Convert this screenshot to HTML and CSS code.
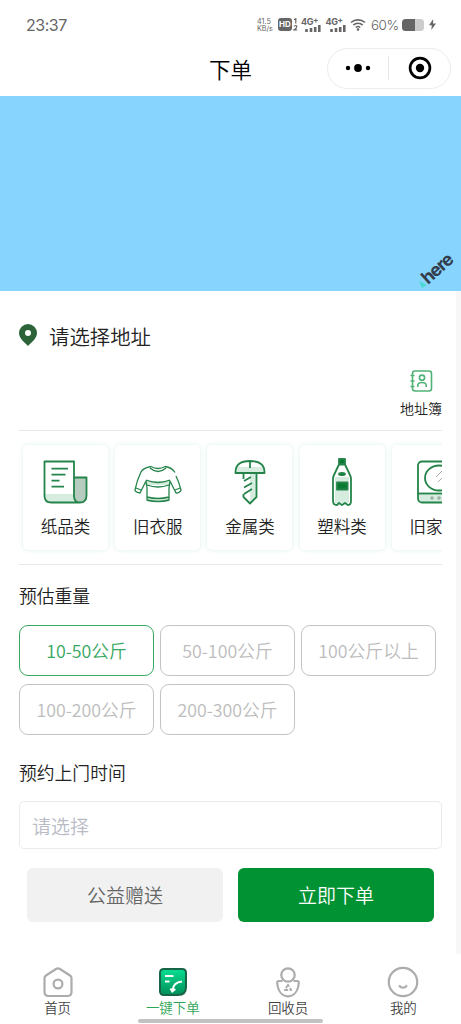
FILE: index.html
```html
<!DOCTYPE html>
<html lang="zh-CN">
<head>
<meta charset="utf-8">
<title>下单</title>
<link rel="stylesheet" href="styles.css">
</head>
<body>
<header class="status">
  <span class="time">23:37</span>
  <div class="indicators">
    <span class="speed">41.5<br>KB/s</span>
    <span class="hd"><b>HD</b><svg viewBox="0 0 5 13" width="5" height="13"><path d="M1 1.500 2.800.8V5.500M.8 8.200q3-1.500 3 .3T.8 12h3.500"/></svg></span>
    <span class="cell">4G<sup>+</sup>
      <svg viewBox="0 0 16 7" width="16" height="7"><path d="M1.500 4v3M6 3V7M10.200 2v5M14.300 0v7"/></svg></span>
    <span class="cell">4G<sup>+</sup>
      <svg viewBox="0 0 16 7" width="16" height="7"><path d="M1.500 4v3M6 3V7M10.200 2v5M14.300 0v7"/></svg></span>
    <svg class="wifi" viewBox="0 0 16 13" width="16" height="13"><path d="M1 4.500a10.500 10.500 0 0 1 14 0M3.300 7.100a7 7 0 0 1 9.400 0M5.700 9.500a3.600 3.600 0 0 1 4.600 0"/><circle cx="8" cy="11.500" r="1.300"/></svg>
    <span class="percent">60%</span>
    <span class="battery"></span>
    <svg class="bolt" viewBox="0 0 7 11" width="7" height="11"><path d="M4.200 0 0 6.200h2.800L2.300 11 7 4.600H4z"/></svg>
  </div>
</header>
<nav class="titlebar">
  <h1>下单</h1>
  <div class="capsule">
    <svg viewBox="0 0 26 10" width="26" height="10"><circle cx="3" cy="5" r="2.200"/><circle cx="13" cy="5" r="3.900"/><circle cx="23" cy="5" r="2.200"/></svg>
    <span class="split"></span>
    <svg viewBox="0 0 24 24" width="24" height="24"><circle cx="12" cy="12" r="9.900" fill="none" stroke="#000" stroke-width="2.700"/><circle cx="12" cy="12" r="4.200"/></svg>
  </div>
</nav>
<section class="map">
  <svg class="here" viewBox="0 0 44 44" width="44" height="44"><path d="m2 32 8 4-5 3z" fill="#48dad0"/><text x="11" y="36" transform="rotate(-42 11 36)">here</text></svg>
</section>
<main class="sheet">
  <div class="address">
    <svg viewBox="0 0 18 22" width="18" height="22"><path fill-rule="evenodd" d="M9 0a9 9 0 0 1 9 9c0 5-4.500 8.500-9 13C4.500 17.500 0 14 0 9a9 9 0 0 1 9-9zm0 6a3 3 0 1 0 0 6 3 3 0 0 0 0-6z"/></svg>
    <span>请选择地址</span>
  </div>
  <div class="book-row">
    <div class="book">
      <svg viewBox="0 0 24 24" width="24" height="24"><rect x="3.500" y="2" width="19" height="20" rx="2.500"/><path d="M1.500 6.500h4M1.500 12h4M1.500 17.500h4M8.800 18v-1.500c0-4 8.400-4 8.400 0V18"/><circle cx="13" cy="8.700" r="2.600"/></svg>
      <span>地址簿</span>
    </div>
  </div>
  <div class="categories">
    <div class="card">
      <svg viewBox="0 0 48 48" width="48" height="48"><path class="tint" d="M3 36h30v9H9q-6-2-6-9z"/><path class="shade" d="M32 19h12v20q0 6-6 6-6-1-6-6z"/><path d="M32 39V3.500H2.500V38q0 6.500 7 6.500H38q6.500 0 6.500-7V19.500H32V38q0 6.500 6 6.500M9.500 10.700H26M9.500 16.700h14M9.500 22.700h8M9.500 28.700H22"/></svg>
      <span>纸品类</span>
    </div>
    <div class="card">
      <svg class="fine" viewBox="0 0 48 48" width="48" height="48"><path class="tint" d="M13 40h22v4H13zM13 23h22v4H13z"/><path d="M17 8.500Q9 10 7 14C4 20 2 27 1 32q0 2 5 3l6-12 1 7v12q11 3 22 0V30l1-7 6 12q4 0 5-3-2-8-5-14M31 8.500q7 1 10 6M17 8.500q7 4 14 0M16 10q8 7 16 0M12 22q12 5 24 0M13 27q11 4 22 0M13 39q11 3 22 0M2 30l5 2M46 30l-5 2"/></svg>
      <span>旧衣服</span>
    </div>
    <div class="card">
      <svg viewBox="0 0 48 48" width="48" height="48"><path class="tint" d="M10 9h28v6H10zM24 15h6v24l-6 6z"/><path d="M9.500 15Q9 3 24 3t14.500 12zM24 4v6M17.500 15v6M30.500 15v24L24 45.500 17.500 39v-3M18 23l7-4M18 29.500l8-4.500M18 36l8-5"/></svg>
      <span>金属类</span>
    </div>
    <div class="card">
      <svg viewBox="0 0 48 48" width="48" height="48"><path class="tint" d="M17 19h14v26H17z"/><path d="M21 6.500 16 17q-1 2-1 4v22q0 4 4 4l2-2 3 2 3-2 3 2q3 0 3-4V21q0-2-1-4L27 6.500z"/><path class="solid" d="M21 1h6v5h-6zM19 24.500h10.500v7H19z"/><ellipse class="solid" cx="24" cy="16" rx="3" ry="1.200"/></svg>
      <span>塑料类</span>
    </div>
    <div class="card">
      <svg class="appliance" viewBox="0 0 48 48" width="48" height="48"><path class="tint" d="M8 36h32v8H8z"/><rect x="8" y="3.500" width="32" height="41" rx="4"/><path d="M8 35.500h32"/><ellipse cx="29" cy="20" rx="14" ry="12.500"/><path class="shine" d="m26 19 6-6M28 24l8-8"/><circle class="knob" cx="22" cy="40" r="1.800"/><circle class="knob" cx="29" cy="40" r="1.800"/></svg>
      <span>旧家电</span>
    </div>
  </div>
  <h2>预估重量</h2>
  <div class="weights">
    <div class="option active">10-50公斤</div>
    <div class="option">50-100公斤</div>
    <div class="option">100公斤以上</div>
    <div class="option">100-200公斤</div>
    <div class="option">200-300公斤</div>
  </div>
  <h2 class="visit">预约上门时间</h2>
  <div class="field">请选择</div>
  <div class="actions">
    <div class="button">公益赠送</div>
    <div class="button primary">立即下单</div>
  </div>
</main>
<footer class="tabs">
  <div class="tab">
    <svg viewBox="0 0 32 32" width="32" height="32"><path d="M14 3 4 9.500Q2.500 10.500 2.500 12v14q0 4 4 4h19q4 0 4-4V12q0-1.500-1.500-2.500L18 3q-2-1.200-4 0z"/><circle cx="16" cy="18" r="4.400"/></svg>
    <span>首页</span>
  </div>
  <div class="tab current">
    <svg viewBox="0 0 32 32" width="32" height="32"><defs><linearGradient id="leaf" x1="0" y1="0" x2="0" y2="1"><stop offset="0" stop-color="#08df92"/><stop offset="1" stop-color="#018f57"/></linearGradient></defs><path d="M7 3h18q4 0 4 4v14q0 8-8 8H7q-4 0-4-4V7q0-4 4-4z" fill="url(#leaf)" stroke="#176548" stroke-width="2"/><path d="M8 10h8.500M8 15.500h4.500M25 15.500q-9 1-9.500 9M13.500 22.500l1.800 3 3-2.500" stroke="#fff" stroke-width="2"/></svg>
    <span>一键下单</span>
  </div>
  <div class="tab">
    <svg viewBox="0 0 32 32" width="32" height="32"><circle cx="16" cy="9" r="6.700"/><path d="M10.500 15H7q-2 0-1.800 2C6 25 10 30.300 16 30.300S26 25 26.800 17q.2-2-1.800-2h-3.500"/><path d="M16 18.800 12.800 24h6.400z" stroke-width="1.800" stroke-linejoin="round" stroke-dasharray="4 1.500"/></svg>
    <span>回收员</span>
  </div>
  <div class="tab">
    <svg viewBox="0 0 32 32" width="32" height="32"><circle cx="16" cy="16" r="14.200"/><path d="M12 19.500q4 4.500 8 0"/></svg>
    <span>我的</span>
  </div>
  <div class="home-bar"></div>
</footer>
</body>
</html>
```

FILE: styles.css
```css
* { box-sizing: border-box; }
body {
  margin: 0;
  width: 461px;
  height: 1024px;
  display: flex;
  flex-direction: column;
  overflow: hidden;
  background: #fff;
  color: #222;
  font-family: "Noto Sans CJK SC", "Noto Sans", sans-serif;
  font-weight: 350;
}
svg { display: block; flex: none; }
h1, h2 { margin: 0; font-weight: 350; }

.status {
  height: 48px;
  padding: 1px 25px 0 26px;
  display: flex;
  align-items: center;
  justify-content: space-between;
  color: #666;
  font-family: Inter, Roboto, sans-serif;
  font-weight: 400;
}
.time { font-size: 16px; letter-spacing: -0.5px; }
.indicators { display: flex; align-items: center; height: 16px; }
.speed { width: 21px; font-size: 7.2px; line-height: 7px; }
.hd { display: flex; width: 23px; align-items: center; gap: 1px; }
.hd b {
  width: 14px;
  height: 13px;
  border-radius: 3px;
  background: #666;
  color: #fff;
  font-size: 8px;
  line-height: 13px;
  text-align: center;
}
.hd svg { fill: none; stroke: #666; stroke-width: 1.2; }
.cell { width: 24.5px; height: 16px; font-size: 9px; font-weight: 700; line-height: 9px; letter-spacing: -0.4px; white-space: nowrap; }
.cell sup { font-size: 8px; line-height: 0; vertical-align: 2px; }
.cell svg { margin-left: 4px; margin-top: -1px; fill: none; stroke: #666; stroke-width: 2.6; }
.wifi { fill: none; stroke: #666; stroke-width: 1.6; }
.wifi circle { fill: #666; stroke: none; }
.percent { width: 36px; padding-left: 5px; font-size: 13.5px; font-weight: 300; letter-spacing: -0.5px; white-space: nowrap; }
.battery {
  width: 22px;
  height: 12px;
  border-radius: 3.5px;
  background: linear-gradient(90deg, #666 13px, #ccc 13px);
}
.bolt { margin-left: 5px; fill: #666; }

.titlebar {
  height: 48px;
  padding: 0 10px 8px 209px;
  display: flex;
  align-items: center;
  justify-content: space-between;
}
h1 { font-size: 21.5px; line-height: 32px; color: #000; padding-top: 1px; }
.capsule {
  width: 124px;
  height: 41px;
  border: 1px solid #ececec;
  border-radius: 21px;
  display: flex;
  align-items: center;
  padding: 0 17px;
}
.split { width: 1px; height: 24px; background: #e6e6e6; margin: 0 19px 0 17px; }

.map { height: 195px; background: #87d4ff; position: relative; }
.here { position: absolute; left: 417px; top: 153px; overflow: visible; }
.here text { font: 700 18px Inter, sans-serif; letter-spacing: -1.1px; fill: #323c4b; }

.sheet {
  height: 663px;
  border-right: 5px solid #f7f7f7;
  padding: 29px 14px 0 19px;
}
.address { height: 31px; display: flex; align-items: center; gap: 12px; font-size: 20.4px; line-height: 30px; }
.address svg { fill: #2d6338; margin-top: -1px; }
.book-row { height: 80px; display: flex; justify-content: flex-end; padding-top: 18px; border-bottom: 1px solid #e8e8e8; }
.book { display: flex; flex-direction: column; align-items: center; font-size: 14px; line-height: 20px; }
.book span { margin-top: 5px; }
.book svg { fill: none; stroke: #50b276; stroke-width: 1.6; }
.categories {
  height: 134px;
  padding: 14px 0 0 4px;
  display: flex;
  gap: 7.2px;
  overflow: hidden;
  border-bottom: 1px solid #e8e8e8;
}
.card {
  flex: none;
  width: 85px;
  height: 105px;
  border-radius: 5px;
  box-shadow: 0 0 5px #d9f2e9;
  background: #fff;
  display: flex;
  flex-direction: column;
  align-items: center;
  padding-top: 13px;
  font-size: 16.5px;
  line-height: 24px;
}
.card span { margin-top: 8px; }
.card svg { fill: none; stroke: #248449; stroke-width: 1.8; stroke-linejoin: round; }
.card .fine { stroke-width: 1.3; }
.card .tint { fill: #d5ecdf; stroke: none; }
.card .shade { fill: #b5ccbe; stroke: none; }
.card .solid { fill: #087b32; }
.card .shine { stroke: #aaa; stroke-width: 1; }
.card .knob { fill: #9eafa6; stroke: none; }

h2 { margin-top: 16px; font-size: 17.8px; line-height: 28px; }
.weights { display: grid; grid-template-columns: repeat(3, 135px); gap: 8px 6px; margin-top: 16px; }
.option {
  height: 51px;
  border: 1px solid #c3c3c3;
  border-radius: 9px;
  text-align: center;
  font-size: 17.8px;
  line-height: 48px;
  color: #bcbcbc;
}
.option.active { border-color: #35a75e; color: #35a75e; }
.visit { margin-top: 23px; }
.field {
  height: 48px;
  margin-top: 15px;
  padding-left: 12px;
  border: 1px solid #ebebeb;
  border-radius: 5px;
  color: #b9bcc5;
  font-size: 19px;
  line-height: 47px;
}
.actions { display: flex; gap: 15px; padding: 19px 8px 0; }
.button {
  flex: 1;
  height: 54px;
  border-radius: 6px;
  background: #f1f1f1;
  color: #666;
  text-align: center;
  font-size: 19px;
  line-height: 54px;
}
.button.primary { background: #009233; color: #fff; }

.tabs { height: 70px; padding-top: 12px; display: flex; position: relative; }
.tab {
  flex: 1;
  display: flex;
  flex-direction: column;
  align-items: center;
  color: #444;
  font-size: 13.5px;
  line-height: 20px;
}
.tab span { margin-top: -1px; }
.tab svg { fill: none; stroke: #acacac; stroke-width: 2.2; }
.tab.current { color: #2fa557; }
.home-bar {
  position: absolute;
  left: 138px;
  top: 65px;
  width: 185px;
  height: 4px;
  border-radius: 2px;
  background: #c2c2c2;
}
```
